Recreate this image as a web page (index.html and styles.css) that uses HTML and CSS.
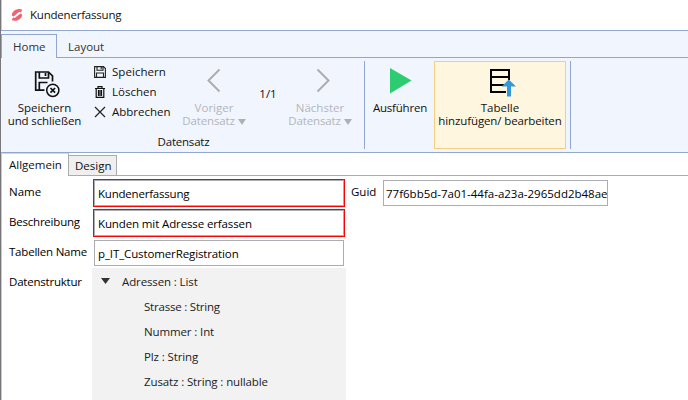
FILE: index.html
```html
<!DOCTYPE html>
<html lang="de">
<head>
<meta charset="utf-8">
<title>Kundenerfassung</title>
<link rel="stylesheet" href="styles.css">
</head>
<body>
<div class="window">
  <header class="titlebar">
    <svg class="logo" width="14" height="14" viewBox="0 0 14 14"><path d="M12.300 1.700C9.500 .2 5 1.300 2.800 4.200C1.300 6.300 1.700 8 3.600 8.400L8.700 4.300C9.300 3.800 10.300 4 10.800 4.600Z"/><path d="M1.700 12.100C4.500 13.700 9 12.600 11.200 9.700C12.700 7.600 12.300 5.800 10.400 5.500L5.300 9.600C4.600 10.100 3.600 9.900 3.200 9.300Z"/></svg>
    <span class="title narrow">Kundenerfassung</span>
  </header>
  <nav class="ribbon-tabs">
    <div class="ribbon-tab active"><span>Home</span></div>
    <div class="ribbon-tab"><span>Layout</span></div>
  </nav>
  <section class="ribbon">
    <div class="group records">
      <div class="tools">
        <div class="big save-close">
          <svg width="28" height="28" viewBox="0 0 28 28" fill="none" stroke="#111" stroke-width="1.700"><path d="M11.500 24.200H2.700V6H15.500L19.500 9.800V15.500M6.300 6V12H15.500V6M12.500 7V10M6.300 24V16.500H14.500"/><circle cx="19.800" cy="24.300" r="6.100" stroke-width="1.500"/><path d="M17.500 22L22.100 26.600M22.100 22L17.500 26.600"/></svg>
          <span>Speichern</span><span class="snug">und schließen</span>
        </div>
        <div class="small-list">
          <div class="small"><svg width="12" height="12" viewBox="0 0 12 12" fill="none" stroke="#222" stroke-width="1.100"><path d="M.6.6H9.500L11.400 2.500V11.400H.6ZM3 .6V4.300H9V.6M7.200 1V3.300M2.500 11V7H9.500V11"/></svg><span class="wide">Speichern</span></div>
          <div class="small"><svg width="12" height="12" viewBox="0 0 12 12" fill="none" stroke="#111" stroke-width="1.200"><path d="M1 2.500H11M4 2.300V.6H8V2.300M2.200 2.500V11.400H9.800V2.500M4.500 4V10M6 4V10M7.500 4V10"/></svg><span>Löschen</span></div>
          <div class="small"><svg width="12" height="12" viewBox="0 0 12 12" fill="none" stroke="#222" stroke-width="1.200"><path d="M1 1L11 11M11 1L1 11"/></svg><span>Abbrechen</span></div>
        </div>
        <div class="big step prev">
          <svg width="28" height="28" viewBox="0 0 28 28" fill="none" stroke="#adadad" stroke-width="2"><path d="M19.500 3.500L8.500 14.500L19.500 25.500"/></svg>
          <span>Voriger</span><span class="snug">Datensatz <i class="caret"></i></span>
        </div>
        <div class="count">1/1</div>
        <div class="big step next">
          <svg width="28" height="28" viewBox="0 0 28 28" fill="none" stroke="#adadad" stroke-width="2"><path d="M11.500 3.500L22.500 14.500L11.500 25.500"/></svg>
          <span>Nächster</span><span class="snug">Datensatz <i class="caret"></i></span>
        </div>
      </div>
      <div class="caption"><span class="narrow">Datensatz</span></div>
    </div>
    <div class="group actions">
      <div class="big run">
        <svg width="28" height="28" viewBox="0 0 28 28"><path d="M4 2L25.500 14.500L4 27.500Z" fill="#2ecc71"/></svg>
        <span class="narrow">Ausführen</span>
      </div>
      <div class="big table selected">
        <svg width="28" height="30" viewBox="0 0 28 30"><path d="M20 26H5V4H23V14M5 11H23M5 19H18" fill="none" stroke="#000" stroke-width="2"/><path d="M22.800 13.500L30 20.500H25V30.500H21V20.500H15.700Z" fill="#3498db"/></svg>
        <span>Tabelle</span><span class="snug">hinzufügen/ bearbeiten</span>
      </div>
    </div>
  </section>
  <nav class="page-tabs">
    <div class="page-tab current"><span>Allgemein</span></div>
    <div class="page-tab other"><span>Design</span></div>
    <div class="tab-rest"></div>
  </nav>
  <main class="form">
    <label>Name</label>
    <div class="field invalid"><span class="narrow">Kundenerfassung</span></div>
    <label class="guid">Guid</label>
    <div class="field guid-field"><span>77f6bb5d-7a01-44fa-a23a-2965dd2b48ae</span></div>
    <label class="narrow first-col">Beschreibung</label>
    <div class="field invalid"><span class="snug">Kunden mit Adresse erfassen</span></div>
    <label class="narrow first-col">Tabellen Name</label>
    <div class="field"><span class="snug">p_IT_CustomerRegistration</span></div>
    <label class="narrow first-col structure">Datenstruktur</label>
    <div class="tree snug">
      <div class="node root"><i class="expander"></i><span>Adressen : List</span></div>
      <div class="node narrow"><span>Strasse : String</span></div>
      <div class="node"><span>Nummer : Int</span></div>
      <div class="node"><span>Plz : String</span></div>
      <div class="node"><span>Zusatz : String : nullable</span></div>
    </div>
  </main>
</div>
</body>
</html>
```
FILE: styles.css
```css
* { box-sizing: border-box; }
body { margin: 0; background: #fff; }
.window {
  height: 400px;
  overflow: hidden;
  border-left: 1px solid #77777c;
  box-shadow: inset 1px 0 #c9c9cd;
  font: 11.5px/16px "Open Sans", "Noto Sans", sans-serif;
  color: #111;
  white-space: nowrap;
}
.snug { letter-spacing: -0.12px; }
.narrow { letter-spacing: -0.21px; }
.wide { letter-spacing: 0.05px; }
svg { display: block; flex: none; overflow: visible; }
.titlebar { height: 30px; display: flex; align-items: center; padding-left: 9px; gap: 6px; }
.logo { fill: #ee6371; }
.ribbon-tabs { height: 28px; display: flex; padding-top: 4px; background: #f1f5fd; border-top: 1px solid #92a7d0; box-shadow: inset 0 -1px #92a7d0; }
.ribbon-tab { height: 23px; padding: 4px 11px; color: #333; }
.ribbon-tab.active { width: 56px; height: 24px; margin-top: -1px; padding-top: 4px; background: #f1f5fd; border: 1px solid #92a7d0; border-bottom: 0; }
.ribbon { height: 95px; display: flex; padding: 3px 0; background: #f1f5fd; border-bottom: 1px solid #92a7d0; }
.group { height: 88px; border-right: 1px solid #92a7d0; }
.records { width: 364px; }
.tools { height: 74px; display: flex; }
.big { display: flex; flex-direction: column; align-items: center; padding-top: 5px; line-height: 13px; }
.big svg { margin-bottom: 7px; }
.save-close { width: 87px; }
.save-close svg { margin-left: 4px; }
.small-list { width: 92px; padding: 1px 0 0 6px; }
.small { height: 20px; display: flex; align-items: center; gap: 6px; }
.step { color: #b3b6bd; }
.prev { width: 68px; }
.count { width: 40px; text-align: center; padding-top: 25px; }
.next { width: 64px; }
.caret { display: inline-block; border: 4px solid transparent; border-top: 6px solid #adb0b8; border-bottom: 0; }
.caption { height: 14px; line-height: 14px; padding-left: 2px; text-align: center; }
.actions { display: flex; width: 206px; }
.run { width: 69px; }
.run span { margin-left: 1px; }
.table { width: 132px; height: 88px; padding-top: 4px; border: 1px solid #f5cd82; background: #fff6df; }
.table svg { margin-bottom: 5px; }
.page-tabs { height: 23px; display: flex; align-items: flex-end; }
.current { width: 68px; height: 23px; padding: 3px 0 0 8px; border-right: 1px solid #acacac; border-top: 1px solid #d5d5d5; }
.other { width: 48px; height: 21px; padding: 2px 6px; border: 1px solid #acacac; border-left: 0; background: #efefef; }
.tab-rest { flex: 1; height: 1px; background: #acacac; }
.form { display: grid; grid-template-columns: 84px 252px 32px 225px; grid-template-rows: 30px 30px 29px auto; padding: 3px 0 0 8px; color: #000; }
.form label { padding-top: 5px; }
.form .structure { padding-top: 6px; }
.form .guid { padding-left: 6px; }
.field { width: 250px; height: 26px; margin: 1px; padding: 5px 2px 0 3px; border: 1px solid #abadb3; background: #fff; overflow: hidden; }
.invalid { width: 252px; height: 28px; margin: 0; padding: 6px 3px 0 4px; border-color: #f00; box-shadow: inset 0 0 0 1px #abadb3; }
.first-col { grid-column: 1; }
.guid-field { width: 225px; margin-left: 6px; padding-left: 2px; }
.tree { width: 254px; height: 132px; margin-left: -1px; padding-top: 2px; background: #f2f2f2; color: #222; }
.node { height: 25px; padding: 4px 0 0 52px; }
.root { display: flex; padding-left: 9px; gap: 12px; }
.expander { width: 9px; height: 6px; margin-top: 4px; background: #333; clip-path: polygon(0 0, 100% 0, 50% 100%); }
```
